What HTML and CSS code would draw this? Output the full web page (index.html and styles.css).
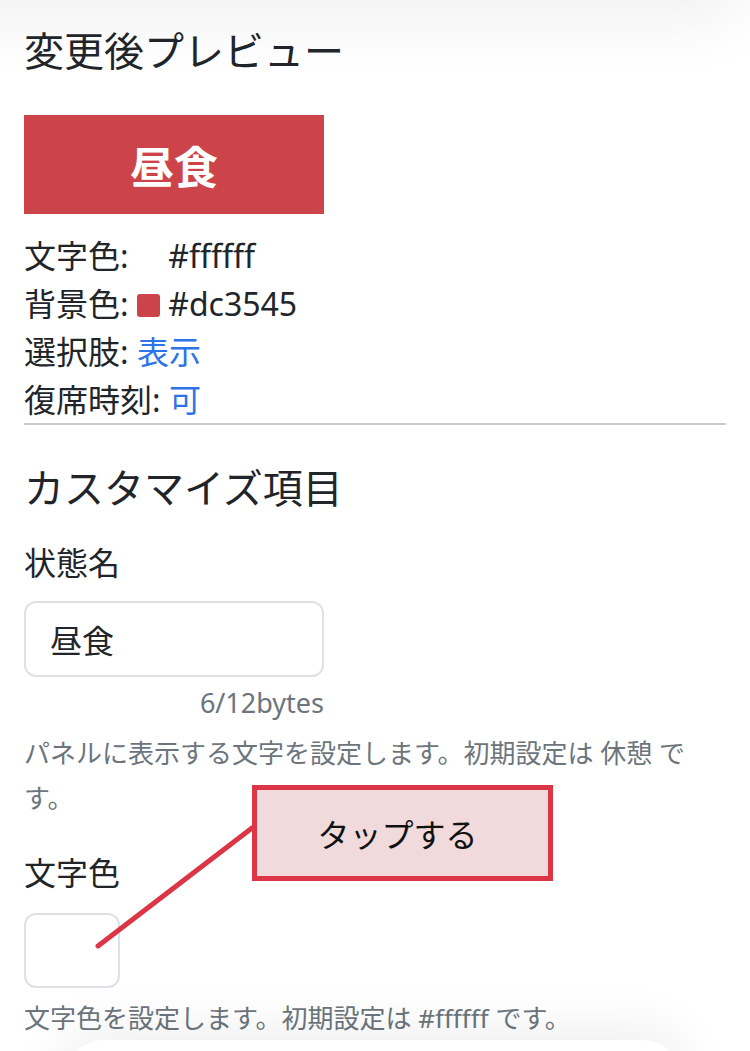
FILE: index.html
```html
<!DOCTYPE html>
<html lang="ja">
<head>
<meta charset="utf-8">
<title>変更後プレビュー</title>
<link rel="stylesheet" href="styles.css">
</head>
<body>
<div class="top-shade"></div>
<main class="page">
  <section class="preview">
    <h2 class="title">変更後プレビュー</h2>
    <div class="panel">昼食</div>
    <ul class="info">
      <li>文字色: <span class="swatch swatch-white"></span> #ffffff</li>
      <li>背景色: <span class="swatch swatch-red"></span> #dc3545</li>
      <li>選択肢: <span class="link">表示</span></li>
      <li>復席時刻: <span class="link">可</span></li>
    </ul>
  </section>
  <hr class="divider">
  <section class="custom">
    <h2 class="title title-custom">カスタマイズ項目</h2>
    <div class="field">
      <label class="label">状態名</label>
      <div class="input-wrap">
        <input class="text-input" type="text" value="昼食">
        <div class="counter">6/12bytes</div>
      </div>
      <p class="help">パネルに表示する文字を設定します。初期設定は 休憩 です。</p>
    </div>
    <div class="field field-color">
      <label class="label">文字色</label>
      <div class="color-box"></div>
      <p class="help help-last">文字色を設定します。初期設定は #ffffff です。</p>
    </div>
  </section>
</main>
<div class="bottom-card"></div>
<svg class="callout-line" width="750" height="1051" viewBox="0 0 750 1051">
  <line x1="98" y1="946" x2="252" y2="828" stroke="#dc3545" stroke-width="5" stroke-linecap="round"/>
</svg>
<div class="callout">タップする</div>
</body>
</html>
```

FILE: styles.css
```css
html, body {
  margin: 0;
  padding: 0;
  background: #ffffff;
}
body {
  position: relative;
  width: 750px;
  height: 1051px;
  overflow: hidden;
  font-family: "Noto Sans", "Noto Sans CJK JP", sans-serif;
  color: #212529;
}
.top-shade {
  position: absolute;
  top: -70px;
  left: -60px;
  right: 20px;
  height: 70px;
  border-radius: 60px;
  background: #f2f2f2;
  box-shadow: 0 10px 60px 20px rgba(0, 0, 0, 0.05);
}
.page {
  position: relative;
  padding: 27px 24px 0;
}
.title {
  margin: 0;
  font-size: 40px;
  line-height: 48px;
  font-weight: 400;
}
.panel {
  margin-top: 40px;
  width: 300px;
  height: 99px;
  background: #cc444a;
  color: #ffffff;
  font-size: 44px;
  font-weight: 700;
  display: flex;
  align-items: center;
  justify-content: center;
}
.info {
  list-style: none;
  margin: 18px 0 0;
  padding: 0;
  font-size: 32px;
  line-height: 48px;
}
.swatch {
  display: inline-block;
  width: 23px;
  height: 23px;
  border-radius: 3px;
  vertical-align: -1px;
}
.swatch-white {
  background: #ffffff;
}
.swatch-red {
  background: #cc444a;
}
.link {
  color: #2d74e8;
}
.divider {
  margin: -1px 0 0;
  border: 0;
  height: 2px;
  background: #cccccc;
}
.title-custom {
  margin-top: 39px;
}
.field {
  margin-top: 27px;
}
.label {
  display: block;
  font-size: 32px;
  line-height: 48px;
}
.input-wrap {
  margin-top: 14px;
  width: 300px;
}
.text-input {
  box-sizing: border-box;
  display: block;
  width: 300px;
  height: 76px;
  padding: 0 24px;
  border: 2px solid #dee2e6;
  border-radius: 12px;
  background: #ffffff;
  font-family: "Noto Sans", "Noto Sans CJK JP", sans-serif;
  font-size: 32px;
  color: #212529;
  outline: none;
}
.counter {
  margin-top: 5px;
  text-align: right;
  font-size: 27px;
  line-height: 42px;
  color: #6c757d;
}
.help {
  margin: 7px 0 0;
  font-size: 26px;
  line-height: 45px;
  color: #6c757d;
}
.field-color {
  margin-top: 28px;
}
.color-box {
  box-sizing: border-box;
  margin-top: 16px;
  width: 96px;
  height: 75px;
  border: 2px solid #dee2e6;
  border-radius: 12px;
  background: #ffffff;
}
.help-last {
  margin-top: 8px;
}
.bottom-card {
  position: absolute;
  left: 68px;
  right: 72px;
  top: 1040px;
  height: 120px;
  border-radius: 34px;
  background: #ffffff;
  box-shadow: 0 -6px 50px 10px rgba(0, 0, 0, 0.06);
}
.callout-line {
  position: absolute;
  top: 0;
  left: 0;
  pointer-events: none;
}
.callout {
  position: absolute;
  left: 252px;
  top: 785px;
  box-sizing: border-box;
  width: 301px;
  height: 96px;
  border: 5px solid #dc3545;
  background: #f0dadb;
  color: #111111;
  font-family: "Noto Sans CJK JP", sans-serif;
  font-size: 32px;
  display: flex;
  align-items: center;
  justify-content: center;
  padding-right: 10px;
}
```
